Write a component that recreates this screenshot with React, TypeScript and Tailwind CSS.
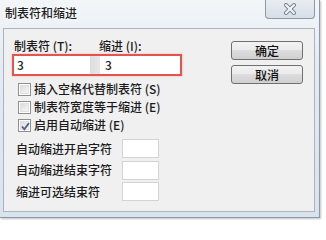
import React from "react"

function CloseGlyph() {
  return (
    <svg width="14" height="12" viewBox="0 0 14 12">
      <path d="M3 2 L11 10 M11 2 L3 10" stroke="#7d8794" strokeWidth="4" strokeLinecap="round" />
      <path d="M3 2 L11 10 M11 2 L3 10" stroke="#f4f6f8" strokeWidth="2" strokeLinecap="round" />
    </svg>
  )
}

function CheckBox({ checked }: { checked?: boolean }) {
  return (
    <span className="relative flex h-[13px] w-[13px] items-center justify-center border border-[#8e8f8f] bg-white">
      <span className="h-[9px] w-[9px] border border-[#e0e0e0] bg-[linear-gradient(135deg,#dcdcdc,#f6f6f6)]" />
      {checked && (
        <svg className="absolute left-[1px] top-[1px]" width="11" height="11" viewBox="0 0 11 11">
          <path d="M2 5.5 L4.3 8.3 L9 2" fill="none" stroke="#4b5f94" strokeWidth="1.8" />
        </svg>
      )}
    </span>
  )
}

function CheckRow({ label, checked }: { label: string; checked?: boolean }) {
  return (
    <div className="flex h-[18px] items-center pl-[6px]">
      <CheckBox checked={checked} />
      <span className="ml-[3px] whitespace-nowrap">{label}</span>
    </div>
  )
}

function CharRow({ label }: { label: string }) {
  return (
    <div className="flex h-[21.5px] items-center pl-[4px]">
      <span className="w-[106px] whitespace-nowrap">{label}</span>
      <span className="h-[19px] w-[37px] border border-[#d3d3d3] bg-white" />
    </div>
  )
}

function PushButton({ label }: { label: string }) {
  return (
    <button className="flex h-[19px] w-[72px] items-center justify-center rounded-[3px] border border-[#707070] bg-[linear-gradient(180deg,#f2f2f2_0%,#ebebeb_45%,#dddddd_50%,#cfcfcf_100%)] text-[12px] leading-none text-[#111]">
      {label}
    </button>
  )
}

export default function App() {
  return (
    <div className="h-[222px] w-[326px] overflow-hidden bg-white font-['Noto_Sans_CJK_SC',sans-serif] text-[12px] font-medium leading-[16px] text-[#1b1b1b]">
      <div className="flex h-[218px] w-[320px] flex-col border-b border-r border-[#8e99a6] bg-[linear-gradient(180deg,#f3f6f9_0%,#e3ebf3_30%,#d9e3ee_100%)] pb-[5px] pl-[3px] pr-[4px] shadow-[1px_1px_2px_rgba(0,0,0,0.25)]">
        <div className="flex h-[28px] items-start justify-between">
          <span className="pl-[2px] pt-[5px] text-[12px] text-[#1e1e1e] [text-shadow:0_0_6px_#fff]">制表符和缩进</span>
          <div className="flex h-[19px] w-[50px] items-center justify-center rounded-b-[4px] border border-t-0 border-[#8d99a7] bg-[linear-gradient(180deg,#e9edf2,#d7dee6)]">
            <CloseGlyph />
          </div>
        </div>

        <div className="flex flex-1 justify-between border border-[#aab4bf] bg-[#f0f0f0]">
          <div className="flex flex-col pl-[8px] pt-[8px]">
            <div className="flex h-[17px] items-center pl-[2px]">
              <span className="w-[85px] whitespace-nowrap">制表符 (T):</span>
              <span className="whitespace-nowrap">缩进 (I):</span>
            </div>
            <div className="flex h-[22px] w-[170px] border-2 border-[#e4534d] shadow-[0_0_2px_#f5b0b0]">
              <span className="flex w-[76px] items-center bg-white pl-[3px]">3</span>
              <span className="w-[10px] bg-[linear-gradient(90deg,#dcdcdc,#e8e8e8)]" />
              <span className="flex flex-1 items-center bg-white pl-[5px]">3</span>
            </div>
            <div className="mt-[4px] flex flex-col">
              <CheckRow label="插入空格代替制表符 (S)" />
              <CheckRow label="制表符宽度等于缩进 (E)" />
              <CheckRow label="启用自动缩进 (E)" checked />
            </div>
            <div className="mt-[4px] flex flex-col">
              <CharRow label="自动缩进开启字符" />
              <CharRow label="自动缩进结束字符" />
              <CharRow label="缩进可选结束符" />
            </div>
          </div>

          <div className="flex flex-col gap-[5px] pr-[11px] pt-[12px]">
            <PushButton label="确定" />
            <PushButton label="取消" />
          </div>
        </div>
      </div>
    </div>
  )
}
